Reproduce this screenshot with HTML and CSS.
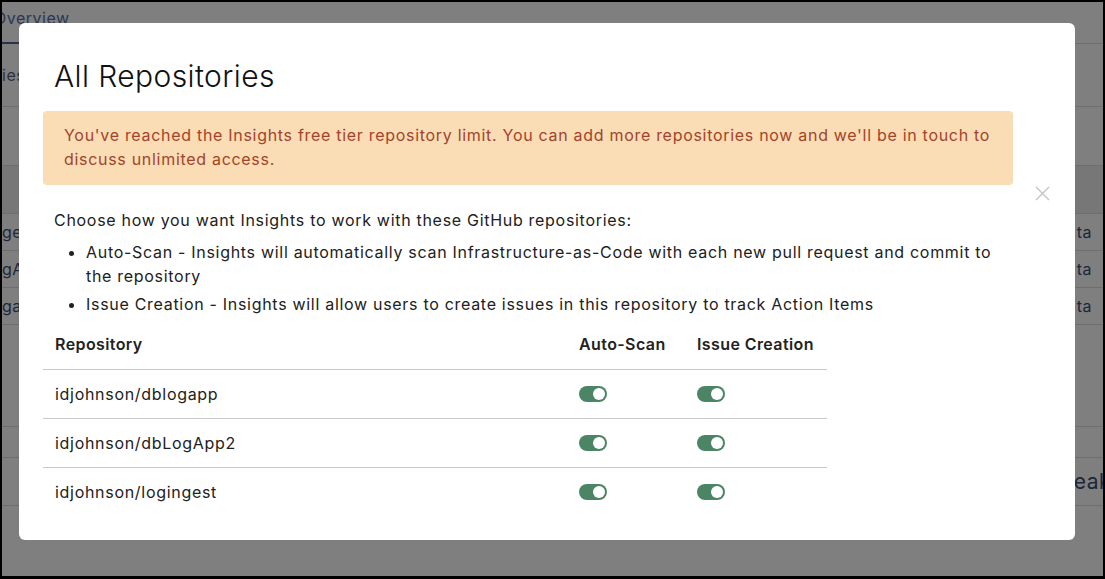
FILE: index.html
```html
<!DOCTYPE html>
<html>
  <head>
    <meta charset="UTF-8" />
    <title>All Repositories</title>
    <link rel="stylesheet" href="styles.css">
  </head>
  <body>
    <div class="screen">
      <!-- page behind the dialog -->
      <div class="page">
        <div class="tabs">
          <span class="tab active">Overview</span>
        </div>
        <div class="subhead"><span>ies</span></div>
        <div class="spacer"></div>
        <div class="bg-thead"></div>
        <div class="bg-row"><span>gest</span><span>ta</span></div>
        <div class="bg-row"><span>gApp2</span><span>ta</span></div>
        <div class="bg-row"><span>gapp</span><span>ta</span></div>
        <div class="spacer-lg"></div>
        <div class="bg-row short"></div>
        <div class="bg-row tall"><span></span><span class="big">eak</span></div>
        <div class="bg-foot">
          <div></div><div></div><div></div><div></div><div></div>
        </div>
      </div>

      <div class="overlay">
        <div class="modal" role="dialog" aria-label="All Repositories">
          <div class="modal-header">
            <h2>All Repositories</h2>
          </div>
          <button class="close" aria-label="Close">
            <svg width="15" height="15" viewBox="0 0 15 15">
              <path d="M1 1 L14 14 M14 1 L1 14" stroke="#c4c4c4" stroke-width="1.4" fill="none" />
            </svg>
          </button>

          <div class="alert">
            You've reached the Insights free tier repository limit. You can add more repositories now and we'll be in touch to discuss unlimited access.
          </div>

          <div class="intro">
            <p>Choose how you want Insights to work with these GitHub repositories:</p>
            <ul>
              <li>Auto-Scan - Insights will automatically scan Infrastructure-as-Code with each new pull request and commit to the repository</li>
              <li>Issue Creation - Insights will allow users to create issues in this repository to track Action Items</li>
            </ul>
          </div>

          <table class="repo-table">
            <thead>
              <tr>
                <th class="col-repo">Repository</th>
                <th class="col-scan">Auto-Scan</th>
                <th class="col-issue">Issue Creation</th>
              </tr>
            </thead>
            <tbody>
              <tr>
                <td>idjohnson/dblogapp</td>
                <td><span class="toggle on"></span></td>
                <td><span class="toggle on"></span></td>
              </tr>
              <tr>
                <td>idjohnson/dbLogApp2</td>
                <td><span class="toggle on"></span></td>
                <td><span class="toggle on"></span></td>
              </tr>
              <tr>
                <td>idjohnson/logingest</td>
                <td><span class="toggle on"></span></td>
                <td><span class="toggle on"></span></td>
              </tr>
            </tbody>
          </table>
        </div>
      </div>
    </div>
  </body>
</html>
```

FILE: styles.css
```css
:root {
  --text-color: #212121;
  --alert-bg: #fadcb5;
  --alert-text: #a2442b;
  --toggle-on: #4b8565;
  --row-border: #c9c9c9;
  --font: Inter, "Open Sans", sans-serif;
}

body {
  margin: 0;
  font-family: var(--font);
  color: var(--text-color);
}

.screen {
  position: relative;
  width: 1105px;
  height: 579px;
  box-sizing: border-box;
  border: 2px solid #000;
  border-bottom-width: 3px;
  overflow: hidden;
  background: #fff;
}

/* Background page */
.page {
  display: flex;
  flex-direction: column;
  font-size: 16px;
  letter-spacing: 0.5px;
  color: #404c74;
}

.tabs {
  height: 41px;
  border-bottom: 1px solid #dcdcdc;
  display: flex;
}

.tab {
  margin-left: -8px;
  padding: 6px 0 0;
  height: 34px;
  color: #5a6ea8;
  font-size: 16px;
}

.tab.active {
  border-bottom: 2px solid #56629a;
}

.subhead {
  height: 62px;
  border-bottom: 1px solid #dcdcdc;
  display: flex;
  align-items: center;
  color: #5b6378;
}

.spacer {
  height: 58px;
}

.bg-thead {
  height: 47px;
  background: #eeeeee;
  border-top: 1px solid #dcdcdc;
  border-bottom: 1px solid #dcdcdc;
}

.bg-row {
  height: 36px;
  border-bottom: 1px solid #dcdcdc;
  display: flex;
  justify-content: space-between;
  align-items: center;
  padding-right: 11px;
}

.spacer-lg {
  height: 101px;
  border-bottom: 1px solid #dcdcdc;
}

.bg-row.short {
  height: 30px;
}

.bg-row.tall {
  height: 47px;
  padding-right: 0;
  overflow: hidden;
}

.bg-row .big {
  font-size: 21px;
  margin-right: -8px;
}

.bg-foot {
  flex: 1;
  height: 71px;
  display: grid;
  grid-template-columns: 333px 32px 533px 32px 1fr;
}

.bg-foot div + div {
  border-left: 1px solid #c8c8c8;
}

.overlay {
  position: absolute;
  inset: 0;
  background: rgba(0, 0, 0, 0.5);
}

/* Dialog */
.modal {
  position: absolute;
  left: 17px;
  top: 21px;
  width: 1056px;
  height: 517px;
  box-sizing: border-box;
  padding: 0 62px 24px 24px;
  background: #fff;
  border-radius: 6px;
  font-size: 16px;
  letter-spacing: 0.7px;
  line-height: 24px;
}

.modal-header {
  padding: 33px 11px 0;
  margin-bottom: 15px;
}

.modal-header h2 {
  margin: 0;
  font-size: 30px;
  font-weight: 300;
  letter-spacing: 0.4px;
  line-height: 40px;
  color: #111;
}

.close {
  position: absolute;
  top: 163px;
  right: 25px;
  padding: 0;
  border: none;
  background: none;
  cursor: pointer;
  line-height: 0;
}

.alert {
  padding: 12px 20px 14px 21px;
  background: var(--alert-bg);
  color: var(--alert-text);
  border-radius: 4px;
}

.intro {
  padding: 0 11px;
  margin-top: 23px;
}

.intro p {
  margin: 0 0 8px;
}

.intro ul {
  margin: 0;
  padding-left: 32px;
}

.intro li + li {
  margin-top: 4px;
}

.repo-table {
  margin-top: 4px;
  border-collapse: collapse;
}

.repo-table th,
.repo-table td {
  padding: 12px;
  text-align: left;
  vertical-align: middle;
}

.repo-table th {
  padding-bottom: 13px;
  font-weight: 600;
  letter-spacing: 0.4px;
  color: #222;
}

.repo-table tbody tr {
  border-top: 1px solid var(--row-border);
}

.col-repo {
  width: 500px;
}

.col-scan {
  width: 94px;
}

.col-issue {
  width: 118px;
}

.toggle {
  display: block;
  position: relative;
  width: 28px;
  height: 16px;
  border-radius: 8px;
  background: #bbb;
}

.toggle::after {
  content: '';
  position: absolute;
  top: 2px;
  left: 2px;
  width: 12px;
  height: 12px;
  border-radius: 50%;
  background: #fff;
}

.toggle.on {
  background: var(--toggle-on);
}

.toggle.on::after {
  left: 14px;
}
```
